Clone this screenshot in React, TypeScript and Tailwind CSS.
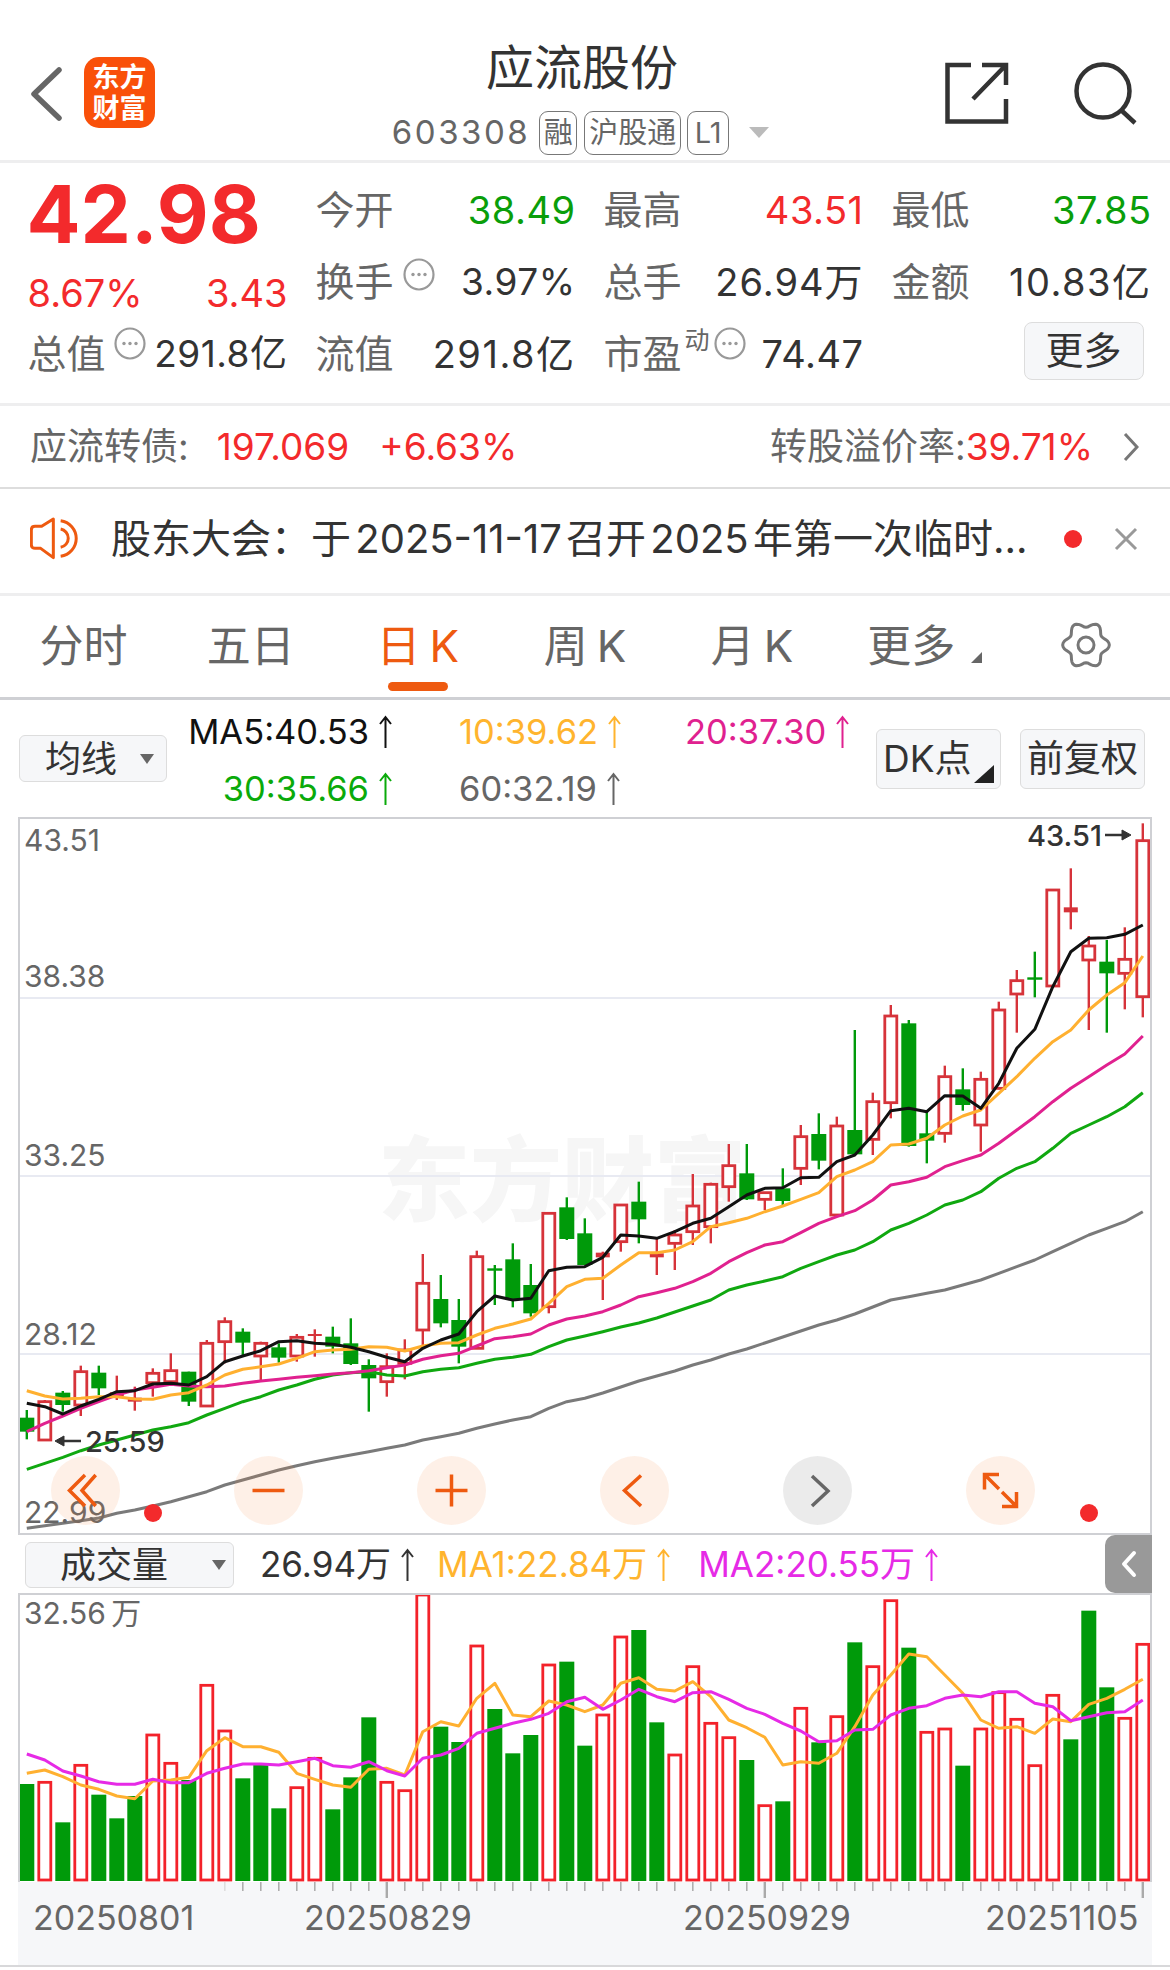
import React from 'react';

type CandleKind = 'r' | 'g';
// wick top, body top, body bottom, wick bottom
type Candle = [number, number, number, number, CandleKind];

// values were read off two crops of the chart, so each half has its own offset
const lower = (v: number) => 1100 + v / 3;
const upper = (v: number) => 800 + v / 3;
const vol = (v: number) => 1500 + v / 3;

const candleLeft: Candle[] = [
  [930, 953, 995, 1018, 'g'], [900, 905, 1020, 1020, 'r'], [873, 878, 915, 935, 'g'], [797, 815, 915, 948, 'r'],
  [797, 818, 865, 885, 'g'], [827, 877, 888, 900, 'r'], [860, 893, 905, 932, 'r'], [805, 820, 848, 890, 'r'],
  [760, 812, 845, 850, 'r'], [815, 815, 905, 918, 'g'], [720, 730, 918, 918, 'r'], [652, 665, 725, 790, 'r'],
  [685, 695, 728, 765, 'g'], [725, 730, 768, 840, 'r'], [730, 742, 773, 788, 'g'], [702, 712, 768, 785, 'r'],
  [688, 702, 708, 770, 'r'], [680, 710, 740, 760, 'g'], [655, 730, 792, 795, 'g'], [778, 795, 835, 935, 'g'],
  [760, 800, 845, 890, 'r'], [718, 750, 790, 838, 'r'], [462, 550, 690, 735, 'r'], [525, 597, 670, 682, 'g'],
  [597, 660, 740, 790, 'g'], [452, 470, 745, 745, 'r'], [495, 505, 510, 615, 'g'], [430, 478, 600, 622, 'g'],
  [492, 555, 640, 650, 'g'], [340, 340, 620, 640, 'r'], [292, 322, 417, 420, 'g'], [355, 400, 495, 495, 'g'],
];

const candleRight: Candle[] = [
  [1355, 1358, 1372, 1500, 'r'], [1215, 1215, 1325, 1355, 'r'], [1145, 1205, 1258, 1330, 'g'], [1315, 1360, 1372, 1425, 'r'],
  [1290, 1305, 1330, 1410, 'r'], [1122, 1218, 1295, 1335, 'r'], [1148, 1153, 1280, 1330, 'r'], [1032, 1097, 1160, 1205, 'r'],
  [1032, 1120, 1198, 1200, 'g'], [1178, 1178, 1198, 1230, 'r'], [1105, 1165, 1203, 1220, 'g'], [975, 1010, 1105, 1155, 'r'],
  [940, 1002, 1082, 1108, 'g'], [950, 978, 1245, 1245, 'r'], [690, 990, 1063, 1065, 'g'], [878, 905, 1018, 1065, 'r'],
  [615, 648, 908, 955, 'r'], [660, 670, 1038, 1040, 'g'], [935, 1000, 1022, 1090, 'g'], [797, 830, 1000, 1028, 'r'],
  [805, 868, 915, 932, 'g'], [815, 838, 975, 1055, 'r'], [605, 630, 865, 868, 'r'], [510, 542, 582, 698, 'r'],
  [455, 532, 537, 592, 'g'], [270, 270, 558, 558, 'r'], [205, 322, 337, 388, 'r'], [408, 438, 480, 690, 'r'],
  [420, 485, 520, 698, 'g'], [382, 478, 520, 628, 'r'], [70, 122, 590, 652, 'r'],
];

const join = (left: number[], right: number[]) => [...left.map(lower), ...right.map(upper)];

const ma5 = join(
  [910, 920, 942, 918, 898, 875, 872, 852, 850, 855, 830, 785, 768, 752, 725, 722, 730, 733, 742, 755, 772, 785, 745, 720, 702, 635, 588, 600, 595, 512, 502, 500],
  [1372, 1305, 1308, 1315, 1295, 1270, 1255, 1220, 1185, 1165, 1163, 1133, 1132, 1085, 1065, 1005, 932, 925, 935, 887, 888, 925, 850, 745, 688, 560, 455, 415, 413, 403, 375],
);
const ma10 = join(
  [872, 888, 897, 895, 890, 890, 897, 898, 885, 878, 855, 825, 808, 800, 792, 775, 755, 750, 748, 740, 742, 753, 738, 730, 728, 705, 685, 672, 657, 610, 560, 538],
  [1435, 1395, 1358, 1358, 1350, 1325, 1280, 1268, 1255, 1235, 1218, 1198, 1178, 1130, 1110, 1085, 1035, 1032, 1015, 975, 948, 930, 880, 830, 775, 725, 690, 630, 585, 548, 468],
);
const ma20 = join(
  [995, 970, 948, 925, 905, 885, 870, 862, 853, 858, 860, 858, 850, 843, 838, 832, 827, 822, 818, 812, 803, 795, 778, 767, 760, 738, 716, 710, 702, 675, 657, 648],
  [1535, 1515, 1490, 1478, 1465, 1445, 1420, 1385, 1358, 1335, 1325, 1298, 1270, 1250, 1232, 1200, 1155, 1145, 1132, 1100, 1082, 1065, 1030, 990, 950, 905, 865, 830, 795, 762, 708],
);
const ma30 = join(
  [1108, 1090, 1072, 1052, 1035, 1020, 1005, 990, 980, 968, 945, 925, 905, 890, 870, 855, 838, 825, 818, 815, 825, 828, 815, 808, 803, 790, 778, 772, 763, 740, 720, 708],
  [1595, 1581, 1569, 1554, 1536, 1518, 1500, 1470, 1455, 1443, 1430, 1405, 1385, 1365, 1350, 1325, 1290, 1270, 1245, 1215, 1200, 1175, 1135, 1105, 1085, 1045, 1000, 975, 950, 920, 878],
);
const ma60 = join(
  [1285, 1277, 1270, 1262, 1254, 1240, 1230, 1218, 1205, 1190, 1175, 1155, 1140, 1125, 1110, 1097, 1085, 1075, 1065, 1055, 1045, 1035, 1020, 1010, 1000, 985, 972, 960, 950, 925, 905, 895],
  [1779, 1761, 1743, 1728, 1713, 1695, 1680, 1662, 1647, 1629, 1611, 1593, 1575, 1560, 1542, 1521, 1500, 1490, 1480, 1470, 1455, 1440, 1420, 1400, 1380, 1355, 1330, 1305, 1285, 1265, 1235],
);

const volumes: [number, CandleKind][] = [
  [852, 'g'], [847, 'r'], [967, 'g'], [796, 'r'], [884, 'g'], [955, 'g'], [888, 'g'], [705, 'r'], [790, 'r'], [840, 'g'],
  [556, 'r'], [693, 'r'], [835, 'g'], [795, 'g'], [925, 'g'], [863, 'r'], [775, 'r'], [928, 'g'], [832, 'g'], [652, 'g'],
  [847, 'r'], [872, 'r'], [285, 'r'], [680, 'g'], [726, 'g'], [438, 'r'], [627, 'g'], [760, 'g'], [705, 'g'], [495, 'r'],
  [485, 'g'], [737, 'g'], [645, 'r'], [411, 'r'], [390, 'g'], [667, 'g'], [765, 'r'], [500, 'r'], [670, 'r'], [713, 'r'],
  [780, 'g'], [917, 'r'], [904, 'g'], [625, 'r'], [727, 'g'], [650, 'r'], [427, 'g'], [500, 'r'], [302, 'r'], [443, 'g'],
  [697, 'r'], [687, 'r'], [797, 'g'], [687, 'r'], [578, 'r'], [658, 'r'], [797, 'r'], [586, 'r'], [718, 'g'], [332, 'g'],
  [562, 'g'], [655, 'r'], [433, 'r'],
];

const volMa1 = [
  820, 810, 830, 855, 868, 888, 896, 843, 840, 832, 752, 713, 740, 740, 757, 820, 838, 855, 862, 808, 805, 825, 695, 665, 678, 595, 550, 645, 650, 603, 615, 635,
  615, 550, 533, 568, 573, 545, 590, 660, 683, 712, 795, 785, 790, 760, 680, 585, 525, 462, 470, 525, 580, 660, 685, 680, 700, 657, 665, 613, 595, 568, 538,
];
const volMa2 = [
  762, 780, 813, 828, 845, 853, 853, 838, 848, 848, 820, 805, 792, 792, 795, 785, 775, 797, 802, 785, 812, 828, 775, 765, 745, 700, 685, 670, 658, 640, 605, 592,
  628, 600, 568, 590, 605, 578, 575, 598, 625, 643, 670, 693, 725, 722, 690, 688, 645, 625, 617, 595, 585, 590, 575, 575, 610, 620, 662, 650, 638, 635, 600,
];

const xAt = (i: number) => 26.8 + 18 * i;
const toPoints = (ys: number[]) => ys.map((y, i) => `${xAt(i).toFixed(1)},${y.toFixed(1)}`).join(' ');

const gearPath = (() => {
  const pts: string[] = [];
  for (let deg = 0; deg < 360; deg += 5) {
    const rad = (deg * Math.PI) / 180;
    const r = 61.5 + 8.5 * Math.cos(6 * rad);
    pts.push(`${(108 + r * Math.cos(rad)).toFixed(1)},${(95 + r * Math.sin(rad)).toFixed(1)}`);
  }
  return pts.join(' ');
})();

const UpArrow: React.FC = () => (
  <svg width="17" height="34" viewBox="0 0 17 34" fill="none" stroke="currentColor" strokeWidth="2" className="shrink-0">
    <path d="M8.5 2V33M3 9L8.5 2L14 9" />
  </svg>
);

const InfoDot: React.FC<{ className: string }> = ({ className }) => (
  <svg width="32" height="33" viewBox="0 0 32 33" fill="none" className={`shrink-0 ${className}`}>
    <ellipse cx="16" cy="16.5" rx="14.5" ry="15" stroke="#999" strokeWidth="2.2" />
    <circle cx="10" cy="16.5" r="1.7" fill="#999" />
    <circle cx="16" cy="16.5" r="1.7" fill="#999" />
    <circle cx="22" cy="16.5" r="1.7" fill="#999" />
  </svg>
);

const Tag: React.FC<{ children: React.ReactNode; className: string }> = ({ children, className }) => (
  <span className={`flex h-[44px] items-center justify-center rounded-[9px] border-[1.5px] border-[#777] text-[29px] text-[#666] ${className}`}>
    {children}
  </span>
);

const Stat: React.FC<{ label: string; value: string; color?: string; spacing?: string }> = ({
  label,
  value,
  color = 'text-[#333]',
  spacing = 'tracking-[0.5px]',
}) => (
  <div className="flex items-center justify-between">
    <span className="text-[39px] text-[#666]">{label}</span>
    <span className={`text-[38px] ${spacing} ${color}`}>{value}</span>
  </div>
);

const Tab: React.FC<{ children: React.ReactNode; active?: boolean }> = ({ children, active }) => (
  <div className="flex flex-col items-center pt-[23px]">
    <div className={`flex h-[54px] items-center text-[44px] ${active ? 'text-[#ee5a10]' : 'text-[#666]'}`}>{children}</div>
    {active && <div className="mt-[9px] h-[9px] w-[60px] rounded-full bg-[#ee5a10]" />}
  </div>
);

const RoundButton: React.FC<{ children: React.ReactNode; gray?: boolean }> = ({ children, gray }) => (
  <div className={`h-[69px] w-[69px] shrink-0 rounded-full ${gray ? 'bg-[#000]/[0.08]' : 'bg-[#f4853a]/[0.12]'}`}>
    <svg width="69" height="69" viewBox="0 0 69 69" fill="none" stroke={gray ? '#666' : '#ee5a10'} strokeWidth="3.5">
      {children}
    </svg>
  </div>
);

const Ma: React.FC<{ text: string; color: string; size?: string; className?: string }> = ({ text, color, size = 'text-[34.5px]', className = '' }) => (
  <div className={`flex items-center gap-[8px] ${size} ${color} ${className}`}>
    <span>{text}</span>
    <UpArrow />
  </div>
);

export default function App() {
  return (
    <div className="relative h-[1970px] w-[1170px] overflow-hidden bg-white [font-family:Inter,'Noto_Sans_CJK_SC',sans-serif]">
      {/* header */}
      <header className="box-content grid h-[160px] grid-cols-[1fr_auto_1fr] border-b-[3px] border-[#eeeeef]">
        <div className="flex items-start pl-[31px] pt-[57px]">
          <svg width="32" height="54" viewBox="0 0 32 54" fill="none" stroke="#666" strokeWidth="5.5" strokeLinecap="round" strokeLinejoin="round" className="mt-[10px]">
            <path d="M28 3L3 27L28 51" />
          </svg>
          <div className="ml-[21px] flex h-[71px] w-[71px] flex-col items-center justify-center rounded-[15px] bg-[#f9500a] text-[27px] font-bold leading-[31px] text-white">
            <span>东方</span>
            <span>财富</span>
          </div>
        </div>
        <div className="flex flex-col items-center pr-[9px] pt-[40px]">
          <div className="h-[56px] pl-[3px] text-[48px] leading-[56px] text-[#333]">应流股份</div>
          <div className="mt-[12px] flex items-center">
            <span className="text-[33px] tracking-[2.5px] text-[#666]">603308</span>
            <Tag className="ml-[9px] w-[38px]">融</Tag>
            <Tag className="ml-[7px] w-[97px]">沪股通</Tag>
            <Tag className="ml-[6px] w-[42px]">L1</Tag>
            <span className="ml-[20px] h-0 w-0 border-x-[10px] border-t-[11px] border-x-transparent border-t-[#bbb]" />
          </div>
        </div>
        <div className="flex items-start justify-end pr-[33px] pt-[61px]">
          <svg width="65" height="64" viewBox="0 0 65 64" fill="none" stroke="#333" strokeWidth="4.5">
            <path d="M27 4H3.5V60.5H62V38M38 4H62V24M62 4L29 38" />
          </svg>
          <svg width="65" height="64" viewBox="0 0 65 64" fill="none" stroke="#333" strokeWidth="4.5" className="ml-[63px]">
            <circle cx="31" cy="30" r="26.5" />
            <path d="M49 49L63 62" />
          </svg>
        </div>
      </header>

      {/* quote */}
      <section className="box-content h-[240px] border-b-[3px] border-[#eeeeef] pl-[27.5px]">
        <div className="grid grid-cols-[260px_260px_260px_260px] auto-rows-[72px] gap-x-[28px] pt-[11px]">
          <div className="row-span-2 flex flex-col">
            <div className="-ml-[1px] -mt-[1px] h-[82px] text-[80px] font-bold leading-[82px] text-[#f32a2c]">42.98</div>
            <div className="mt-[19px] flex h-[38px] items-center justify-between text-[38px] text-[#f32a2c]">
              <span>8.67%</span>
              <span>3.43</span>
            </div>
          </div>
          <Stat label="今开" value="38.49" color="text-[#0a9e0a]" />
          <Stat label="最高" value="43.51" color="text-[#f32a2c]" />
          <Stat label="最低" value="37.85" color="text-[#0a9e0a]" />
          <div className="flex items-center">
            <span className="text-[39px] text-[#666]">换手</span>
            <InfoDot className="mb-[16px] ml-[9px]" />
            <span className="ml-auto text-[37px] tracking-[0.5px] text-[#333]">3.97%</span>
          </div>
          <Stat label="总手" value="26.94万" spacing="tracking-[1px]" />
          <Stat label="金额" value="10.83亿" spacing="tracking-[1.5px]" />
          <div className="flex items-center">
            <span className="text-[39px] text-[#666]">总值</span>
            <InfoDot className="mb-[21px] ml-[8px]" />
            <span className="ml-auto text-[37px] tracking-[0.5px] text-[#333]">291.8亿</span>
          </div>
          <Stat label="流值" value="291.8亿" spacing="tracking-[1.5px]" />
          <div className="flex items-center">
            <span className="text-[39px] text-[#666]">市盈</span>
            <span className="mb-[26px] ml-[3px] text-[25px] text-[#666]">动</span>
            <InfoDot className="mb-[21px] ml-[4px]" />
            <span className="ml-auto text-[38px] tracking-[0.5px] text-[#333]">74.47</span>
          </div>
          <div className="flex items-center justify-end pr-[8px]">
            <div className="mb-[7px] flex h-[58px] w-[120px] items-center justify-center rounded-[8px] border-[1.5px] border-[#ddd] bg-[#f6f7f9] text-[38px] text-[#333]">
              更多
            </div>
          </div>
        </div>
      </section>

      {/* convertible bond */}
      <section className="flex h-[83px] items-center border-b-2 border-[#ddd] pl-[30px] pr-[31px] text-[37px]">
        <span className="text-[#666]">应流转债:</span>
        <span className="ml-[28px] text-[#f32a2c]">197.069</span>
        <span className="ml-[30px] text-[#f32a2c]">+6.63%</span>
        <span className="ml-auto text-[#666]">转股溢价率:</span>
        <span className="text-[#f32a2c]">39.71%</span>
        <svg width="16" height="30" viewBox="0 0 16 30" fill="none" stroke="#777" strokeWidth="3" className="ml-[30px]">
          <path d="M2 2L14 15L2 28" />
        </svg>
      </section>

      {/* notice */}
      <section className="box-content flex h-[100px] items-center border-b-[3px] border-[#eeeeef] pb-[4px] pl-[30px] pr-[32px]">
        <svg width="50" height="44" viewBox="30 24 150 132" fill="none" stroke="#ee5a10" strokeWidth="9" strokeLinejoin="round" className="shrink-0">
          <path d="M100 30L65 52H45Q34 52 34 63V107Q34 118 45 118H62L100 146Z" />
          <path d="M122 35A54 54 0 0 1 122 142M122 60A28 28 0 0 1 122 115" />
        </svg>
        <span className="ml-[31px] text-[40px] text-[#333] [word-spacing:-7px]">股东大会：于 2025-11-17 召开 2025 年第一次临时...</span>
        <span className="ml-auto h-[18px] w-[18px] rounded-full bg-[#f32a2c]" />
        <svg width="24" height="24" viewBox="0 0 24 24" fill="none" stroke="#999" strokeWidth="3" className="ml-[32px]">
          <path d="M2 2L22 22M22 2L2 22" />
        </svg>
      </section>

      {/* period tabs */}
      <nav className="box-content grid h-[101px] grid-cols-7 border-b-[3px] border-[#cfd0d4]">
        <Tab>分时</Tab>
        <Tab>五日</Tab>
        <Tab active>日<span className="ml-[9px]">K</span></Tab>
        <Tab>周<span className="ml-[9px]">K</span></Tab>
        <Tab>月<span className="ml-[9px]">K</span></Tab>
        <div className="relative flex flex-col items-center pr-[16px] pt-[23px]">
          <div className="flex h-[54px] items-center text-[44px] text-[#666]">更多</div>
          <span className="absolute right-[21px] top-[56px] h-0 w-0 border-b-[11px] border-l-[11px] border-b-[#666] border-l-transparent" />
        </div>
        <div className="flex justify-center pt-[26px]">
          <svg width="50" height="46" viewBox="36 26 144 138" fill="none" stroke="#777" strokeWidth="9">
            <polygon points={gearPath} strokeLinejoin="round" />
            <circle cx="108" cy="95" r="24" />
          </svg>
        </div>
      </nav>

      {/* indicator row */}
      <section className="flex h-[117px] items-center pl-[19px]">
        <div className="flex h-[47px] w-[148px] items-center rounded-[6px] border-[1.5px] border-[#ddd] bg-[#f6f7f9] pl-[25px] text-[36px] text-[#333]">
          均线
          <span className="ml-[23px] h-0 w-0 border-x-[7px] border-t-[10px] border-x-transparent border-t-[#666]" />
        </div>
        <div className="ml-[13px] grid grid-cols-[214px_161px_170px] auto-rows-[57px] gap-x-[65px] pt-[3px]">
          <Ma text="MA5:40.53" color="text-[#111]" className="justify-end" />
          <Ma text="10:39.62" color="text-[#ffb42e]" />
          <Ma text="20:37.30" color="text-[#e0218f]" />
          <Ma text="30:35.66" color="text-[#0aaa0a]" className="justify-end" />
          <Ma text="60:32.19" color="text-[#666]" />
        </div>
        <div className="relative ml-[21px] flex h-[60px] w-[125px] items-center rounded-[6px] border-[1.5px] border-[#ddd] bg-[#f6f7f9] pl-[6px] text-[37px] text-[#333]">
          DK点
          <span className="absolute bottom-[5px] right-[6px] h-0 w-0 border-b-[18px] border-l-[20px] border-b-[#222] border-l-transparent" />
        </div>
        <div className="ml-[19px] flex h-[60px] w-[125px] items-center justify-center rounded-[6px] border-[1.5px] border-[#ddd] bg-[#f6f7f9] text-[37px] text-[#333]">
          前复权
        </div>
      </section>

      {/* k-line */}
      <div className="relative ml-[18px] box-content h-[714px] w-[1130px] border-2 border-[#cfd0d4]">
        <svg width="1130" height="714" viewBox="20 819 1130 714" className="block">
          <text x="378" y="1214" className="fill-[#f6f6f6] text-[92px] font-black">东方财富</text>
          <line x1="20" y1="998" x2="1150" y2="998" stroke="#e8eaf2" strokeWidth="2" />
          <line x1="20" y1="1176" x2="1150" y2="1176" stroke="#e8eaf2" strokeWidth="2" />
          <line x1="20" y1="1354" x2="1150" y2="1354" stroke="#e8eaf2" strokeWidth="2" />
          {[...candleLeft.map((c) => c.map((v) => (typeof v === 'number' ? lower(v) : v))), ...candleRight.map((c) => c.map((v) => (typeof v === 'number' ? upper(v) : v)))].map((raw, i) => {
            const [wt, bt, bb, wb, kind] = raw as [number, number, number, number, CandleKind];
            const x = xAt(i);
            if (kind === 'g') {
              return (
                <g key={i} fill="#009a0a">
                  <rect x={x - 1.2} y={wt} width="2.4" height={wb - wt} />
                  <rect x={x - 7.5} y={bt} width="15" height={Math.max(bb - bt, 2.4)} />
                </g>
              );
            }
            const thin = bb - bt < 6;
            return (
              <g key={i}>
                <rect x={x - 1.2} y={wt} width="2.4" height={wb - wt} fill="#d6333a" />
                {thin ? (
                  <rect x={x - 7} y={bt} width="14" height={bb - bt} fill="#d6333a" />
                ) : (
                  <rect x={x - 6} y={bt} width="12" height={bb - bt} fill="white" stroke="#d6333a" strokeWidth="2.8" />
                )}
              </g>
            );
          })}
          <g fill="none" strokeWidth="3" strokeLinejoin="round">
            <polyline points={toPoints(ma60)} stroke="#7a7a7a" />
            <polyline points={toPoints(ma30)} stroke="#10a810" />
            <polyline points={toPoints(ma20)} stroke="#e0218f" />
            <polyline points={toPoints(ma10)} stroke="#ffb030" />
            <polyline points={toPoints(ma5)} stroke="#111" />
          </g>
          <g className="fill-[#666] text-[30px]" dominantBaseline="central">
            <text x="24" y="840">43.51</text>
            <text x="24" y="976">38.38</text>
            <text x="24" y="1155">33.25</text>
            <text x="24" y="1334">28.12</text>
            <text x="24" y="1512">22.99</text>
          </g>
          <g className="fill-[#333] text-[29px] font-medium" dominantBaseline="central">
            <text x="1027" y="835">43.51</text>
            <text x="85" y="1441">25.59</text>
          </g>
          <g stroke="#333" strokeWidth="2.5" fill="#333">
            <path d="M1105 835H1126" />
            <path d="M1131 835L1122 830V840Z" strokeWidth="1" />
            <path d="M60 1441H81" />
            <path d="M55 1441L64 1436V1446Z" strokeWidth="1" />
          </g>
          <circle cx="153" cy="1513" r="9" fill="#f32a2c" />
          <circle cx="1089" cy="1513" r="9" fill="#f32a2c" />
        </svg>
        <div className="absolute left-[31px] top-[637px] flex gap-[114px]">
          <RoundButton>
            <path d="M34 19L18.5 34.5L34 50M44.7 19L31 34.5L44.7 50" />
          </RoundButton>
          <RoundButton>
            <path d="M18.5 34.5H50.5" />
          </RoundButton>
          <RoundButton>
            <path d="M18.5 34.5H50.5M34.5 18.5V50.5" />
          </RoundButton>
          <RoundButton>
            <path d="M41 19.5L24.5 34.5L41 50" />
          </RoundButton>
          <RoundButton gray>
            <path d="M29 20L45 35L29 50" />
          </RoundButton>
          <RoundButton>
            <path d="M33 18.5H18.5V33.5M18.5 18.5L33 33M36 50.5H50.5V36M50.5 50.5L36 36" />
          </RoundButton>
        </div>
      </div>

      {/* volume header */}
      <section className="relative flex h-[58px] items-center pl-[25px] pt-[1px]">
        <div className="flex h-[46px] w-[209px] items-center rounded-[6px] border-[1.5px] border-[#ddd] bg-[#f6f7f9] pl-[34px] text-[36px] text-[#333]">
          成交量
          <span className="ml-[44px] h-0 w-0 border-x-[7px] border-t-[10px] border-x-transparent border-t-[#666]" />
        </div>
        <Ma text="26.94万" color="text-[#333]" size="text-[35px]" className="ml-[26px]" />
        <Ma text="MA1:22.84万" color="text-[#ffb42e]" size="text-[35px]" className="ml-[21px]" />
        <Ma text="MA2:20.55万" color="text-[#e62ae6]" size="text-[35px]" className="ml-[26px]" />
        <div className="absolute right-[18px] top-0 flex h-[58px] w-[47px] items-center justify-center rounded-l-[10px] bg-[#999]">
          <svg width="16" height="28" viewBox="0 0 16 28" fill="none" stroke="white" strokeWidth="4" strokeLinecap="round" strokeLinejoin="round">
            <path d="M13 3L3 14L13 25" />
          </svg>
        </div>
      </section>

      {/* volume */}
      <div className="ml-[18px] box-content h-[287px] w-[1130px] border-x-2 border-t-2 border-[#cfd0d4]">
        <svg width="1130" height="287" viewBox="20 1595 1130 287" className="block">
          {volumes.map(([top, kind], i) => {
            const x = xAt(i);
            const y = vol(top);
            return kind === 'g' ? (
              <rect key={i} x={x - 7.5} y={y} width="15" height={1881 - y} fill="#009a0a" />
            ) : (
              <rect key={i} x={x - 6} y={y} width="12" height={1880 - y} fill="white" stroke="#f3222a" strokeWidth="2.8" />
            );
          })}
          <g fill="none" strokeWidth="3" strokeLinejoin="round">
            <polyline points={toPoints(volMa1.map(vol))} stroke="#ffb030" />
            <polyline points={toPoints(volMa2.map(vol))} stroke="#e62ae6" />
          </g>
          <text x="24" y="1613" dominantBaseline="central" className="fill-[#666] text-[30px] [word-spacing:-3px]">32.56 万</text>
        </svg>
      </div>

      {/* date axis */}
      <div className="border-b-2 border-[#d8d8da]">
        <div className="ml-[18px] h-[83px] w-[1134px] bg-[#f6f7f9]">
          <svg width="1134" height="83" viewBox="18 1882 1134 83" className="block">
            {volumes.map((_, i) =>
              i < 11 ? null : i === 20 || i === 41 || i === 62 ? (
                <rect key={i} x={xAt(i) - 1.2} y="1882" width="2.4" height="16" fill="#aaa" />
              ) : (
                <rect key={i} x={xAt(i) - 0.75} y="1882" width="1.5" height="9" fill={i === 11 ? '#ddd' : '#aaa'} />
              ),
            )}
            <g className="fill-[#666] text-[34px]" dominantBaseline="central">
              <text x="33" y="1917">20250801</text>
              <text x="304" y="1917">20250829</text>
              <text x="683" y="1917">20250929</text>
              <text x="985" y="1917">20251105</text>
            </g>
          </svg>
        </div>
      </div>
    </div>
  );
}
